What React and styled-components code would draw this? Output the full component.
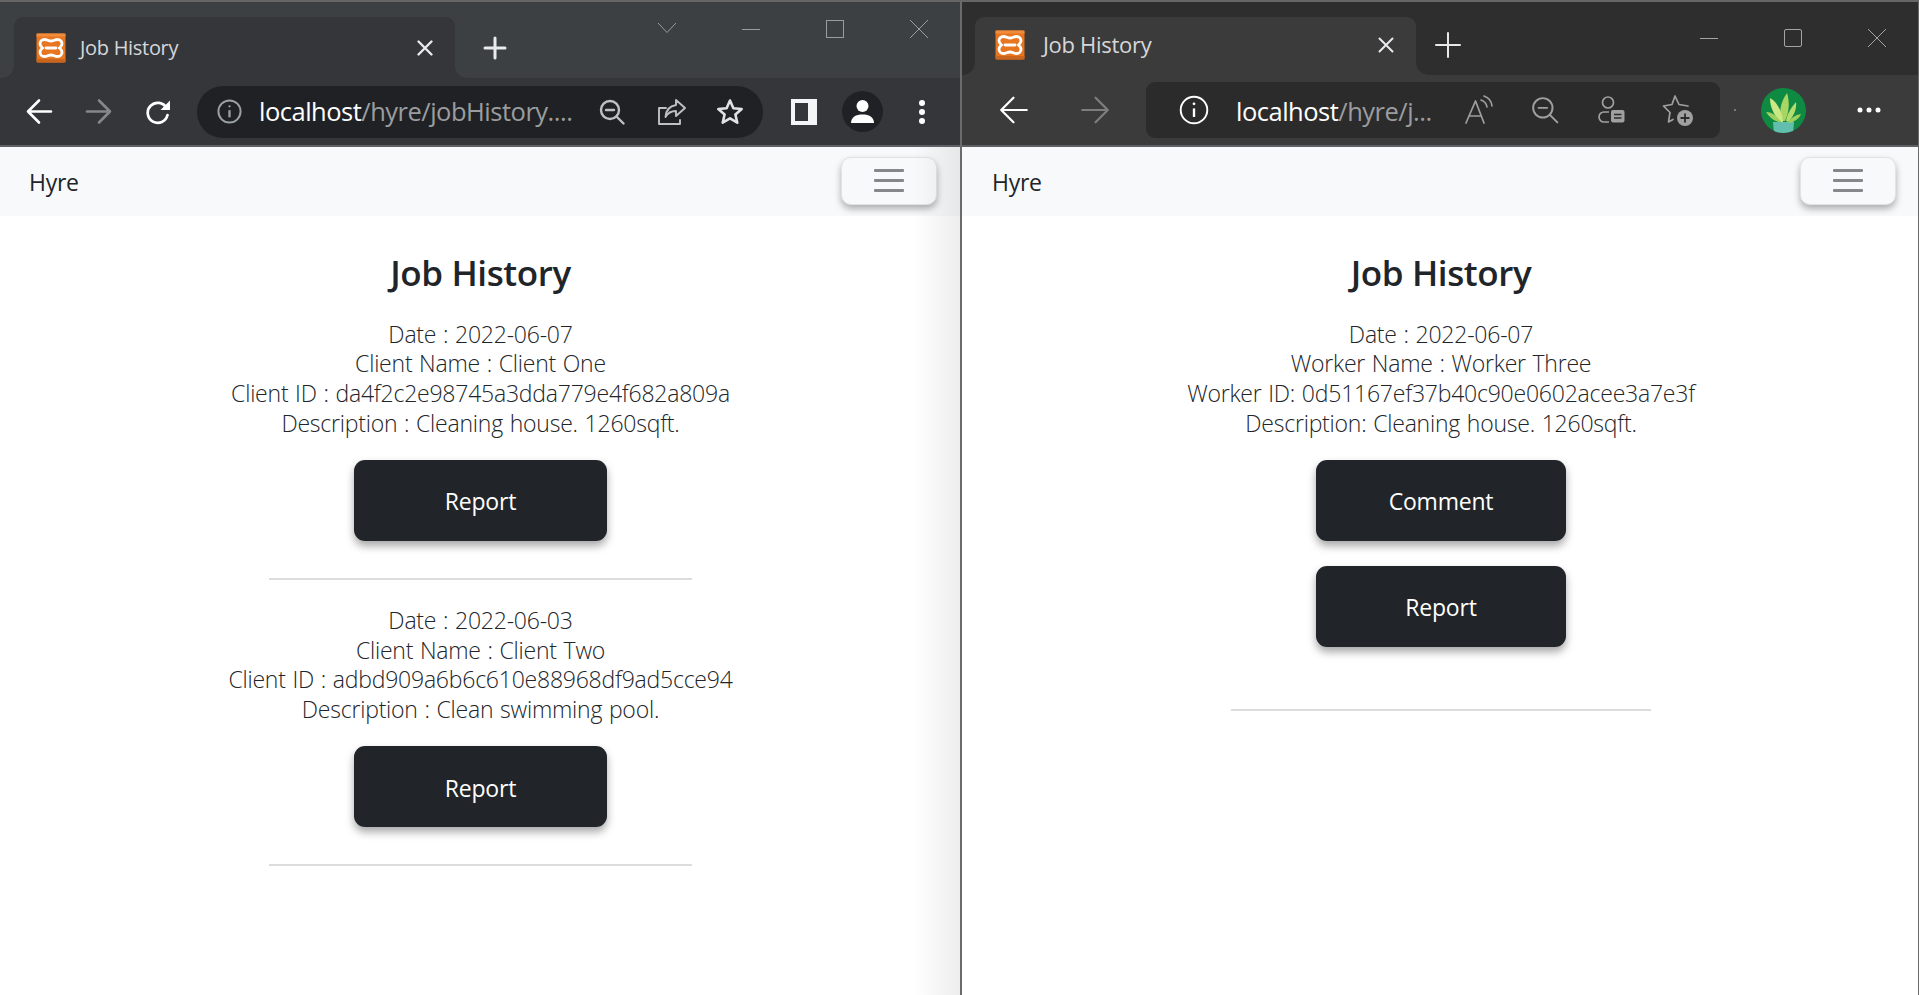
import React from "react";
import styled, { createGlobalStyle } from "styled-components";

const GlobalStyle = createGlobalStyle`
  html, body { margin: 0; padding: 0; height: 100%; background: #ffffff; overflow: hidden; }
  #root { height: 100%; }
  * { box-sizing: border-box; }
`;

const chromeSkin = {
  strip: "#3c4043",
  bar: "#35363a",
  address: "#202124",
  tabHeight: 61,
  barHeight: 69,
  tabLeft: 14,
  titleGap: 14,
  faviconLeft: 22,
  addressRadius: 26,
  addressHeight: 52,
};

const edgeSkin = {
  strip: "#2e2e2e",
  bar: "#3b3b3b",
  address: "#2b2b2b",
  tabHeight: 58,
  barHeight: 72,
  tabLeft: 13,
  titleGap: 18,
  faviconLeft: 20,
  addressRadius: 9,
  addressHeight: 56,
};

const Page = styled.div`
  display: flex;
  height: 995px;
  width: 1919px;
  background: #ffffff;
  font-family: "Open Sans", "Noto Sans", sans-serif;
`;

const Window = styled.div`
  position: relative;
  display: flex;
  flex-direction: column;
  width: ${(p) => p.$width}px;
  border-top: 2px solid #666666;
  border-right: ${(p) => p.$rightBorder}px solid #6b6b6b;
  background: #ffffff;
`;

const EdgeFade = styled.div`
  position: absolute;
  top: 145px;
  right: 0;
  bottom: 0;
  width: 46px;
  pointer-events: none;
  background: linear-gradient(to right, rgba(0, 0, 0, 0), rgba(0, 0, 0, 0.07));
`;

const TabStrip = styled.div`
  display: flex;
  align-items: flex-end;
  height: ${(p) => p.$skin.tabHeight + 15}px;
  padding-left: ${(p) => p.$skin.tabLeft}px;
  background: ${(p) => p.$skin.strip};
`;

const Tab = styled.div`
  position: relative;
  display: flex;
  align-items: center;
  width: 441px;
  height: ${(p) => p.$skin.tabHeight}px;
  padding: 0 0 ${(p) => (p.$edge ? 3 : 0)}px ${(p) => p.$skin.faviconLeft}px;
  border-radius: 9px 9px 0 0;
  background: ${(p) => p.$skin.bar};

  &::before,
  &::after {
    content: "";
    position: absolute;
    bottom: 0;
    width: 12px;
    height: 12px;
    background: radial-gradient(circle at 0 0, ${(p) => p.$skin.strip} 11.5px, ${(p) => p.$skin.bar} 12px);
  }
  &::before {
    left: -12px;
  }
  &::after {
    right: -12px;
    background: radial-gradient(circle at 100% 0, ${(p) => p.$skin.strip} 11.5px, ${(p) => p.$skin.bar} 12px);
  }
`;

const TabTitle = styled.span`
  flex: 1;
  margin-left: ${(p) => p.$skin.titleGap}px;
  margin-bottom: ${(p) => (p.$edge ? 2 : 0)}px;
  color: #d5d7da;
  font-size: ${(p) => (p.$edge ? 22 : 20)}px;
  letter-spacing: -0.3px;
  white-space: nowrap;
`;

const TabClose = styled.span`
  display: flex;
  justify-content: center;
  width: 24px;
  margin-right: 18px;
`;

const NewTab = styled.span`
  display: flex;
  justify-content: center;
  align-self: center;
  width: 40px;
  margin-left: ${(p) => p.$left}px;
  margin-top: ${(p) => p.$top}px;
`;

const WindowControls = styled.div`
  display: flex;
  align-items: center;
  height: 100%;
  margin-left: auto;
  margin-right: -1px;
  padding-bottom: ${(p) => p.$bottom}px;
`;

const ControlSlot = styled.span`
  display: flex;
  justify-content: center;
  width: 84px;
`;

const Toolbar = styled.div`
  display: flex;
  align-items: center;
  height: ${(p) => p.$skin.barHeight}px;
  padding-left: ${(p) => p.$left}px;
  background: ${(p) => p.$skin.bar};
  border-bottom: 2px solid #5f6063;
`;

const Slot = styled.span`
  display: flex;
  flex: none;
  align-items: center;
  justify-content: center;
  width: ${(p) => p.$width}px;
  height: 44px;
`;

const AddressBar = styled.div`
  display: flex;
  flex: none;
  align-items: center;
  width: ${(p) => p.$width}px;
  height: ${(p) => p.$skin.addressHeight}px;
  margin: 0 ${(p) => p.$right}px 0 ${(p) => p.$left}px;
  padding-left: ${(p) => p.$pad}px;
  border-radius: ${(p) => p.$skin.addressRadius}px;
  background: ${(p) => p.$skin.address};
`;

const Url = styled.span`
  flex: none;
  width: ${(p) => p.$width}px;
  margin: ${(p) => (p.$lift ? "0 0 2px" : "2px 0 0")};
  overflow: hidden;
  color: #ffffff;
  font-size: 25.5px;
  letter-spacing: -0.5px;
  white-space: nowrap;
`;

const UrlPath = styled.span`
  color: #9a9da0;
`;

const Dot = styled.span`
  flex: none;
  width: 2px;
  height: 2px;
  margin: 0 25px 0 14px;
  background: #77787a;
`;

const Navbar = styled.nav`
  display: flex;
  align-items: center;
  justify-content: space-between;
  height: 69px;
  padding: 0 ${(p) => p.$right}px 0 ${(p) => p.$left}px;
  background: #f8f9fa;
`;

const Brand = styled.span`
  color: #212529;
  font-size: 23px;
  letter-spacing: -0.3px;
`;

const Burger = styled.button`
  display: flex;
  flex-direction: column;
  align-items: center;
  justify-content: center;
  gap: 7px;
  width: 96px;
  height: 48px;
  padding: 0;
  margin-top: -2px;
  border: 1px solid #e2e3e5;
  border-radius: 10px;
  background: #f8f9fa;
  box-shadow: 0 4px 7px rgba(0, 0, 0, 0.3);
`;

const BurgerBar = styled.span`
  width: 30px;
  height: 3px;
  border-radius: 1px;
  background: #85888b;
`;

const Content = styled.main`
  display: flex;
  flex-direction: column;
  align-items: center;
  padding: 33px 0 0 ${(p) => p.$shift}px;
`;

const Title = styled.h2`
  margin: 0 0 22.5px;
  color: #212529;
  font-size: 35px;
  font-weight: 600;
  line-height: 48px;
  letter-spacing: -0.4px;
`;

const Job = styled.section`
  display: flex;
  flex-direction: column;
  align-items: center;
  width: ${(p) => p.$width}px;
`;

const Details = styled.div`
  color: #212529;
  font-size: 23px;
  font-weight: 300;
  line-height: 29.7px;
  letter-spacing: -0.22px;
  word-spacing: 1px;
  text-align: center;
  white-space: nowrap;
`;

const ActionButton = styled.button`
  width: ${(p) => p.$width}px;
  height: 81px;
  margin-top: ${(p) => p.$top}px;
  padding: 2px 0 0;
  border: none;
  border-radius: 11px;
  background: #212529;
  color: #ffffff;
  font-family: inherit;
  font-size: 23px;
  letter-spacing: -0.2px;
  box-shadow: 0 5px 8px rgba(0, 0, 0, 0.35);
`;

const Rule = styled.hr`
  width: 100%;
  height: 2px;
  margin: ${(p) => p.$top}px 0 26px;
  border: none;
  background: #dcdcdc;
`;

const Stroke = ({ size = 24, color = "#fff", width = 2.4, view = 24, children }) => (
  <svg width={size} height={size} viewBox={`0 0 ${view} ${view}`} fill="none" stroke={color} strokeWidth={width} strokeLinecap="round" strokeLinejoin="round">
    {children}
  </svg>
);

const Favicon = () => (
  <svg width="30" height="30" viewBox="0 0 30 30" style={{ flex: "none" }}>
    <rect x="0.5" y="0.5" width="29" height="29" rx="2" fill="#e8751f" />
    <rect x="0.5" y="0.5" width="29" height="3" fill="#f08c3c" />
    <rect x="0.5" y="26" width="29" height="3.500" fill="#c9651c" />
    <path
      d="M8.500 6.500c2.500 0 4 1.500 6.500 1.500s4-1.500 6.500-1.500c2.700 0 4.500 2 4.500 4.300 0 1.900-1.300 3-2.500 4.200 1.200 1.200 2.500 2.300 2.500 4.200 0 2.300-1.800 4.300-4.500 4.300-2.500 0-4-1.500-6.500-1.500s-4 1.500-6.500 1.500c-2.700 0-4.500-2-4.500-4.300 0-1.900 1.300-3 2.500-4.200C5.300 13.800 4 12.700 4 10.800c0-2.300 1.800-4.300 4.500-4.300z"
      fill="none"
      stroke="#fff"
      strokeWidth="2.800"
    />
    <path d="M10 15h10" stroke="#fff" strokeWidth="2.800" strokeLinecap="round" />
  </svg>
);

const XMark = ({ color = "#e8eaed", width = 2.2 }) => (
  <Stroke size={18} color={color} width={width} view={18}>
    <path d="M2.5 2.5l13 13M15.5 2.5l-13 13" />
  </Stroke>
);

const Caption = ({ kind, color = "#9a9c9e" }) => (
  <svg width="20" height="20" viewBox="0 0 20 20" fill="none" stroke={color} strokeWidth="1">
    {kind === "chevron" && <path d="M1 4l9 9.5L19 4" />}
    {kind === "min" && <path d="M1 10.5h18" />}
    {kind === "max" && <rect x="1.5" y="1.5" width="17" height="17" rx={color === "#a5a5a5" ? 1.5 : 0} />}
    {kind === "close" && <path d="M1 1l18 18M19 1L1 19" />}
  </svg>
);

const Arrow = ({ flip, color = "#fff", size = 27, width = 2.6 }) => (
  <Stroke size={size} color={color} width={width} view={27}>
    {flip ? <path d="M2 13.5h23M14 2.5l11 11-11 11" /> : <path d="M25 13.5H2M13 2.5l-11 11 11 11" />}
  </Stroke>
);

const InfoIcon = ({ size, color, width }) => (
  <svg width={size} height={size} viewBox="0 0 28 28" fill="none" stroke={color} strokeWidth={width}>
    <circle cx="14" cy="14" r="12.4" />
    <path d="M14 12.5v8" strokeWidth={width + 0.4} />
    <circle cx="14" cy="8.2" r="1.3" fill={color} stroke="none" />
  </svg>
);

const ZoomOut = ({ color, width, size = 26 }) => (
  <Stroke size={size} color={color} width={width} view={26}>
    <circle cx="11" cy="11" r="9" />
    <path d="M17.500 17.500l7 7M7 11h8" />
  </Stroke>
);

const Reload = () => (
  <svg width="26" height="26" viewBox="0 0 26 26" fill="none">
    <path d="M21.500 9a10 10 0 1 0 1 7" stroke="#fff" strokeWidth="2.700" strokeLinecap="round" />
    <path d="M25 1.500V11h-9.500z" fill="#fff" />
  </svg>
);

const Share = () => (
  <Stroke size={30} color="#bdc1c6" width={1.9} view={30}>
    <path d="M9 11H2v16h21v-4" />
    <path d="M19 3l9 8-9 8v-5c-5 0-8 1.500-10.500 6 .5-7 4-11 10.500-12z" />
  </Stroke>
);

const StarIcon = () => (
  <Stroke size={28} color="#e0e2e5" width={2.6} view={28}>
    <path d="M14 2.500l3.400 7.700 8.300.8-6.300 5.500 1.900 8.200-7.300-4.300-7.300 4.300 1.900-8.200L2.300 11l8.300-.8z" />
  </Stroke>
);

const SidePanel = () => (
  <svg width="26" height="26" viewBox="0 0 26 26">
    <rect width="26" height="26" fill="#f4f5f7" />
    <rect x="4" y="4" width="13" height="18" fill="#35363a" />
  </svg>
);

const Avatar = () => (
  <svg width="41" height="41" viewBox="0 0 41 41">
    <circle cx="20.500" cy="20.500" r="20.500" fill="#202124" />
    <circle cx="20.500" cy="15" r="6" fill="#fff" />
    <path d="M9 32c0-6 5-8.500 11.500-8.500S32 26 32 32z" fill="#fff" />
  </svg>
);

const MenuDots = () => (
  <svg width="8" height="26" viewBox="0 0 8 26" fill="#fff">
    <circle cx="4" cy="4" r="3" />
    <circle cx="4" cy="13" r="3" />
    <circle cx="4" cy="22" r="3" />
  </svg>
);

const ReadAloud = () => (
  <Stroke size={30} color="#a0a0a0" width={1.7} view={30}>
    <path d="M2 28L11.500 6 20 28M5 21h12" />
    <path d="M17 5c3 1 5.500 3.500 6 7M20 1c4.500 1.500 7.500 5 8 10" strokeWidth={1.7} />
  </Stroke>
);

const ProfileNote = () => (
  <svg width="28" height="30" viewBox="0 0 28 30" fill="none" stroke="#a0a0a0" strokeWidth="1.7">
    <circle cx="11" cy="7.500" r="5.500" />
    <path d="M12 17H7a5 5 0 0 0 0 10h5" />
    <rect x="14" y="15" width="13.500" height="12.500" rx="2" fill="#a0a0a0" stroke="none" />
    <path d="M17 19.500h7.500M17 23h7.500" stroke="#2b2b2b" strokeWidth="1.500" />
  </svg>
);

const StarPlus = () => (
  <svg width="32" height="32" viewBox="0 0 32 32" fill="none">
    <path d="M27 12l-9-1.500L14 2l-3 8.500-8.500 1.500 6.500 6.500L7.500 28l4.500-2.500" stroke="#a0a0a0" strokeWidth="1.700" strokeLinejoin="round" strokeLinecap="round" />
    <circle cx="24" cy="24" r="8" fill="#a0a0a0" />
    <path d="M24 19.500v9M19.500 24h9" stroke="#2b2b2b" strokeWidth="1.800" />
  </svg>
);

const PlantAvatar = () => (
  <svg width="45" height="45" viewBox="0 0 45 45">
    <defs>
      <clipPath id="plant-disc">
        <circle cx="22.500" cy="22.500" r="22.500" />
      </clipPath>
    </defs>
    <g clipPath="url(#plant-disc)">
      <rect width="45" height="45" fill="#0f8a43" />
      <path d="M12 34h21l-1 11H13z" fill="#62bfae" />
      <path d="M21 33C17 25 20 13 26 5c3 9 2 20-2 28z" fill="#a9d663" />
      <path d="M20 34C13 28 9 19 9 10c7 4 12 13 13 24z" fill="#cbe884" />
      <path d="M25 33c1-7 5-13 10-19 1 8-3 15-8 20z" fill="#b5dd6d" />
      <path d="M18 34c-5-1-10-5-13-10 6 0 11 4 15 10zM27 34c3-4 7-7 13-8-2 5-7 8-12 9z" fill="#9ed05f" />
    </g>
  </svg>
);

const HorizontalDots = () => (
  <svg width="26" height="8" viewBox="0 0 26 8" fill="#fff">
    <circle cx="4" cy="4" r="2.500" />
    <circle cx="13" cy="4" r="2.500" />
    <circle cx="22" cy="4" r="2.500" />
  </svg>
);

const Hamburger = () => (
  <Burger aria-label="Toggle navigation">
    <BurgerBar />
    <BurgerBar />
    <BurgerBar />
  </Burger>
);

const leftJobs = [
  {
    lines: ["Date : 2022-06-07", "Client Name : Client One", "Client ID : da4f2c2e98745a3dda779e4f682a809a", "Description : Cleaning house. 1260sqft."],
    actions: ["Report"],
  },
  {
    lines: ["Date : 2022-06-03", "Client Name : Client Two", "Client ID : adbd909a6b6c610e88968df9ad5cce94", "Description : Clean swimming pool."],
    actions: ["Report"],
  },
];

const rightJobs = [
  {
    lines: ["Date : 2022-06-07", "Worker Name : Worker Three", "Worker ID: 0d51167ef37b40c90e0602acee3a7e3f", "Description: Cleaning house. 1260sqft."],
    actions: ["Comment", "Report"],
  },
];

const JobList = ({ jobs, shift, jobWidth, buttonWidth }) => (
  <Content $shift={shift}>
    <Title>Job History</Title>
    {jobs.map((job) => (
      <Job key={job.lines[2]} $width={jobWidth}>
        <Details>
          {job.lines.map((line) => (
            <div key={line}>{line}</div>
          ))}
        </Details>
        {job.actions.map((action, i) => (
          <ActionButton key={action} $width={buttonWidth} $top={i === 0 ? 21.5 : 25}>
            {action}
          </ActionButton>
        ))}
        <Rule $top={job.actions.length > 1 ? 62 : 37} />
      </Job>
    ))}
  </Content>
);

export default function App() {
  return (
    <Page>
      <GlobalStyle />
      <Window $width={962} $rightBorder={2}>
        <TabStrip $skin={chromeSkin}>
          <Tab $skin={chromeSkin}>
            <Favicon />
            <TabTitle $skin={chromeSkin}>Job History</TabTitle>
            <TabClose>
              <XMark width={2.4} />
            </TabClose>
          </Tab>
          <NewTab $left={20} $top={16}>
            <Stroke size={24} color="#e8eaed" width={3} view={24}>
              <path d="M12 2v20M2 12h20" />
            </Stroke>
          </NewTab>
          <WindowControls $bottom={22}>
            <ControlSlot><Caption kind="chevron" /></ControlSlot>
            <ControlSlot><Caption kind="min" /></ControlSlot>
            <ControlSlot><Caption kind="max" /></ControlSlot>
            <ControlSlot><Caption kind="close" /></ControlSlot>
          </WindowControls>
        </TabStrip>
        <Toolbar $skin={chromeSkin} $left={10}>
          <Slot $width={59}><Arrow /></Slot>
          <Slot $width={59}><Arrow flip color="#85878a" /></Slot>
          <Slot $width={59}><Reload /></Slot>
          <AddressBar $skin={chromeSkin} $width={566} $left={10} $right={11} $pad={2}>
            <Slot $width={60}><InfoIcon size={25} color="#9aa0a6" width={2.2} /></Slot>
            <Url $width={322} $lift>
              localhost<UrlPath>/hyre/jobHistory....</UrlPath>
            </Url>
            <Slot $width={61}><ZoomOut color="#bdc1c6" width={2.4} /></Slot>
            <Slot $width={59}><Share /></Slot>
            <Slot $width={58}><StarIcon /></Slot>
          </AddressBar>
          <Slot $width={59}><SidePanel /></Slot>
          <Slot $width={59}><Avatar /></Slot>
          <Slot $width={59}><MenuDots /></Slot>
        </Toolbar>
        <Navbar $left={29} $right={23}>
          <Brand>Hyre</Brand>
          <Hamburger />
        </Navbar>
        <JobList jobs={leftJobs} shift={1} jobWidth={423} buttonWidth={253} />
        <EdgeFade />
      </Window>

      <Window $width={957} $rightBorder={1}>
        <TabStrip $skin={edgeSkin}>
          <Tab $skin={edgeSkin} $edge>
            <Favicon />
            <TabTitle $skin={edgeSkin} $edge>Job History</TabTitle>
            <TabClose>
              <XMark width={2} />
            </TabClose>
          </Tab>
          <NewTab $left={12} $top={13}>
            <Stroke size={26} color="#e8e8e8" width={2} view={26}>
              <path d="M13 1v24M1 13h24" />
            </Stroke>
          </NewTab>
          <WindowControls $bottom={1}>
            <ControlSlot><Caption kind="min" color="#a5a5a5" /></ControlSlot>
            <ControlSlot><Caption kind="max" color="#a5a5a5" /></ControlSlot>
            <ControlSlot><Caption kind="close" color="#a5a5a5" /></ControlSlot>
          </WindowControls>
        </TabStrip>
        <Toolbar $skin={edgeSkin} $left={11}>
          <Slot $width={81}><Arrow size={30} width={2} /></Slot>
          <Slot $width={81}><Arrow flip size={30} width={2} color="#7e7e7e" /></Slot>
          <AddressBar $skin={edgeSkin} $width={574} $left={11} $right={0} $pad={5}>
            <Slot $width={85}><InfoIcon size={30} color="#ffffff" width={1.8} /></Slot>
            <Url $width={210}>
              localhost<UrlPath>/hyre/j...</UrlPath>
            </Url>
            <Slot $width={66}><ReadAloud /></Slot>
            <Slot $width={66}><ZoomOut color="#a0a0a0" width={1.8} size={28} /></Slot>
            <Slot $width={66}><ProfileNote /></Slot>
            <Slot $width={66}><StarPlus /></Slot>
          </AddressBar>
          <Dot />
          <Slot $width={45}><PlantAvatar /></Slot>
          <Slot $width={125}><HorizontalDots /></Slot>
        </Toolbar>
        <Navbar $left={30} $right={22}>
          <Brand>Hyre</Brand>
          <Hamburger />
        </Navbar>
        <JobList jobs={rightJobs} shift={2} jobWidth={420} buttonWidth={250} />
      </Window>
    </Page>
  );
}
